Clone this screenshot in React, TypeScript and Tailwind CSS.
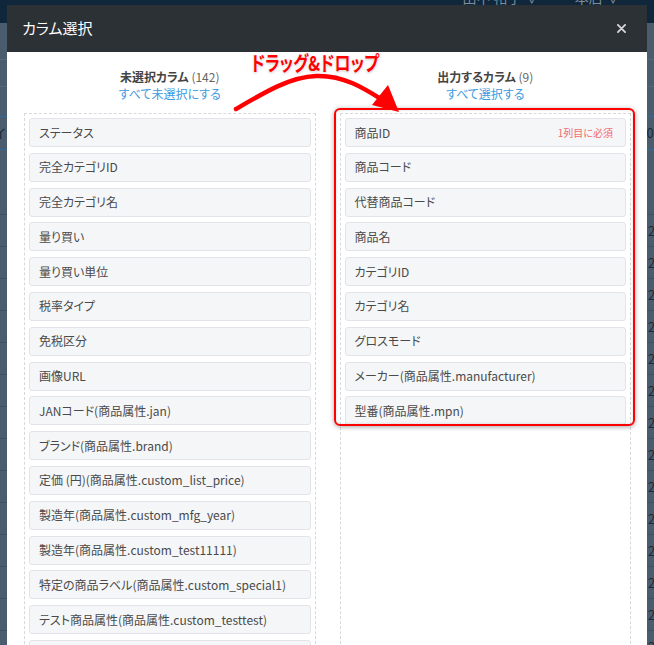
import React from "react";

const leftItems = [
  "ステータス",
  "完全カテゴリID",
  "完全カテゴリ名",
  "量り買い",
  "量り買い単位",
  "税率タイプ",
  "免税区分",
  "画像URL",
  "JANコード(商品属性.jan)",
  "ブランド(商品属性.brand)",
  "定価 (円)(商品属性.custom_list_price)",
  "製造年(商品属性.custom_mfg_year)",
  "製造年(商品属性.custom_test11111)",
  "特定の商品ラベル(商品属性.custom_special1)",
  "テスト商品属性(商品属性.custom_testtest)",
  "テスト商品属性2(商品属性.custom_test2)",
];

const rightItems = [
  "商品ID",
  "商品コード",
  "代替商品コード",
  "商品名",
  "カテゴリID",
  "カテゴリ名",
  "グロスモード",
  "メーカー(商品属性.manufacturer)",
  "型番(商品属性.mpn)",
];

function Item({ label, note }: { label: string; note?: string }) {
  return (
    <div className="h-[29px] shrink-0 flex items-center justify-between rounded-[3px] border border-[#e2e4e9] bg-[#f5f6f8] pl-[9px] pr-[12px] text-[12px] text-[#4a4a4a] whitespace-nowrap">
      <span>{label}</span>
      {note && <span className="text-[10px] text-[#f26b6b]">{note}</span>}
    </div>
  );
}

export default function App() {
  const bgRows = Array.from({ length: 14 }, (_, i) => i);
  return (
    <div className="relative w-[654px] h-[645px] overflow-hidden bg-[#4a5d6e] font-['Noto_Sans_CJK_JP','Noto_Sans',sans-serif] [font-feature-settings:'palt']">
      {/* background page behind overlay */}
      <div className="h-[23px] bg-[#10263a] flex justify-end items-start pr-[34px] gap-[36px] text-[14px] text-[#7f8c99] leading-none overflow-hidden">
        <span className="-mt-[10px]">田中 裕子 ∨</span>
        <span className="-mt-[10px]">本店 ∨</span>
      </div>
      <div className="flex flex-col">
        <div className="h-[37px] border-b border-[#56697a]" />
        <div className="h-[27px] border-b border-[#56697a]" />
        <div className="h-[13px]" />
        <div className="h-[17px] border-b border-[#2f6a9c]" />
        <div className="h-[33px] border-b border-[#2f6a9c] flex items-center text-[13px] text-[#1d2a36]">
          <span className="-ml-[6px]">イ</span>
          <span className="ml-[641px]">00</span>
        </div>
        <div className="h-[65px] border-b border-[#3e5163]" />
        {bgRows.map((i) => (
          <div
            key={i}
            className="h-[32px] shrink-0 border-b border-[#3e5163] flex items-center text-[13px] text-[#1d2a36]"
          >
            <span className="ml-[648px]">20</span>
          </div>
        ))}
      </div>

      {/* modal */}
      <div className="absolute left-[7px] top-[5px] w-[640px] h-[660px] bg-white flex flex-col">
        <div className="h-[47px] shrink-0 bg-[#2c3135] flex items-center justify-between pl-[15px] pr-[21px]">
          <span className="text-[15px] text-white">カラム選択</span>
          <svg width="9" height="9" viewBox="0 0 10 10" className="text-[#d5d7d9]">
            <path d="M1 1 L9 9 M9 1 L1 9" stroke="currentColor" strokeWidth="2" strokeLinecap="round" />
          </svg>
        </div>
        <div className="grid grid-cols-2 gap-[24px] pl-[17px] pr-[16px] pt-[16px] flex-1">
          {/* left column */}
          <div className="flex flex-col min-h-0">
            <div className="flex flex-col items-center text-[12px] leading-[17px]">
              <div className="text-[#444]">
                <span className="font-bold">未選択カラム</span>{" "}
                <span className="text-[#666]">(142)</span>
              </div>
              <div className="text-[#3b9ae1]">すべて未選択にする</div>
            </div>
            <div className="mt-[11px] flex-1 border border-dashed border-[#d6d8dc] p-[4px] flex flex-col gap-[5.8px] overflow-hidden">
              {leftItems.map((t) => (
                <Item key={t} label={t} />
              ))}
            </div>
          </div>
          {/* right column */}
          <div className="flex flex-col min-h-0">
            <div className="flex flex-col items-center text-[12px] leading-[17px]">
              <div className="text-[#444]">
                <span className="font-bold">出力するカラム</span>{" "}
                <span className="text-[#666]">(9)</span>
              </div>
              <div className="text-[#3b9ae1]">すべて選択する</div>
            </div>
            <div className="relative mt-[11px] flex-1">
              <div className="h-full border border-dashed border-[#d6d8dc] p-[4px] flex flex-col gap-[5.8px] overflow-hidden">
                {rightItems.map((t, i) => (
                  <Item key={t} label={t} note={i === 0 ? "1列目に必須" : undefined} />
                ))}
              </div>
              <div className="absolute left-[-6px] top-[-5px] w-[301px] h-[318px] rounded-[6px] border-2 border-[#ff0000] shadow-[0_1px_5px_rgba(0,0,0,0.35),inset_0_0_3px_rgba(0,0,0,0.15)]" />
            </div>
          </div>
        </div>
      </div>

      {/* annotation arrow */}
      <svg
        className="absolute left-0 top-0 pointer-events-none"
        width="654"
        height="645"
        viewBox="0 0 654 645"
      >
        <path
          d="M236 109 C 265 92, 290 77, 316 76 C 343 75, 364 88, 384 101"
          fill="none"
          stroke="#ff0000"
          strokeWidth="4.5"
          strokeLinecap="round"
        />
        <polygon points="399,112 372,105 388,85" fill="#ff0000" />
      </svg>
      <div className="absolute left-[251px] top-[50px] origin-left scale-x-[0.8] text-[20px] leading-[26px] font-bold text-[#ff0000] whitespace-nowrap [text-shadow:0_0_2px_#fff,0_1px_3px_rgba(0,0,0,0.25)]">
        ドラッグ&amp;ドロップ
      </div>
    </div>
  );
}
